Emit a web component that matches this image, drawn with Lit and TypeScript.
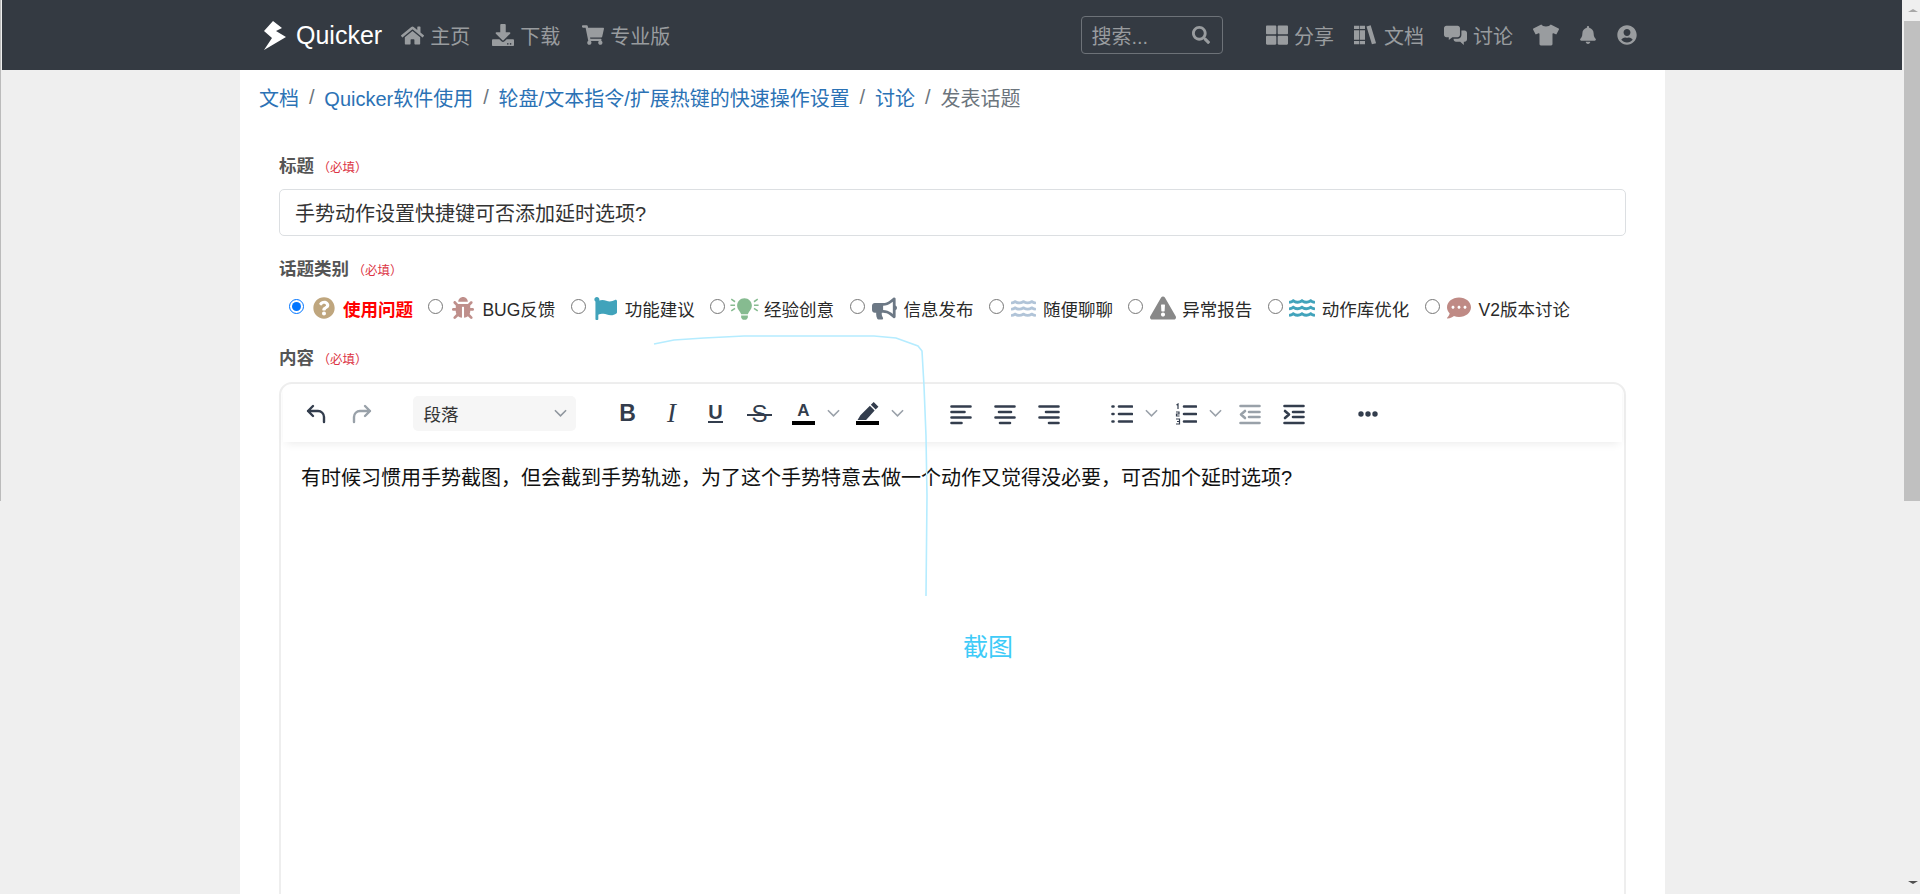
import { LitElement, html, css } from "lit";
import { customElement } from "lit/decorators.js";

const P = {
  home: ["0 0 576 512", "M280.37 148.26L96 300.11V464a16 16 0 0 0 16 16l112.06-.29a16 16 0 0 0 15.92-16V368a16 16 0 0 1 16-16h64a16 16 0 0 1 16 16v95.64a16 16 0 0 0 16 16.05L464 480a16 16 0 0 0 16-16V300L295.67 148.26a12.19 12.19 0 0 0-15.3 0zM571.6 251.47L488 182.56V44.05a12 12 0 0 0-12-12h-56a12 12 0 0 0-12 12v72.61L318.47 43a48 48 0 0 0-61 0L4.34 251.47a12 12 0 0 0-1.6 16.9l25.5 31A12 12 0 0 0 45.15 301l235.22-193.74a12.19 12.19 0 0 1 15.3 0L530.9 301a12 12 0 0 0 16.9-1.6l25.5-31a12 12 0 0 0-1.7-16.93z"],
  download: ["0 0 512 512", "M216 0h80c13.3 0 24 10.7 24 24v168h87.7c17.8 0 26.7 21.5 14.1 34.1L269.7 378.3c-7.5 7.5-19.8 7.5-27.3 0L90.1 226.1c-12.6-12.6-3.7-34.1 14.1-34.1H192V24c0-13.3 10.7-24 24-24zm296 376v112c0 13.3-10.7 24-24 24H24c-13.3 0-24-10.7-24-24V376c0-13.3 10.7-24 24-24h146.7l49 49c20.1 20.1 52.5 20.1 72.6 0l49-49H488c13.3 0 24 10.7 24 24zm-124 88c0-11-9-20-20-20s-20 9-20 20 9 20 20 20 20-9 20-20zm64 0c0-11-9-20-20-20s-20 9-20 20 9 20 20 20 20-9 20-20z"],
  cart: ["0 0 576 512", "M528.12 301.319l47.273-208C578.806 78.301 567.391 64 551.99 64H159.208l-9.166-44.81C147.758 8.021 137.93 0 126.529 0H24C10.745 0 0 10.745 0 24v16c0 13.255 10.745 24 24 24h69.883l70.248 343.435C147.325 417.1 136 435.222 136 456c0 30.928 25.072 56 56 56s56-25.072 56-56c0-15.674-6.447-29.835-16.824-40h209.647C430.447 426.165 424 440.326 424 456c0 30.928 25.072 56 56 56s56-25.072 56-56c0-22.172-12.888-41.332-31.579-50.405l5.517-24.276c3.413-15.018-8.002-29.319-23.403-29.319H218.117l-6.545-32h293.145c11.206 0 20.92-7.754 23.403-18.681z"],
  search: ["0 0 512 512", "M505 442.7L405.3 343c-4.5-4.5-10.6-7-17-7H372c27.6-35.3 44-79.7 44-128C416 93.1 322.9 0 208 0S0 93.1 0 208s93.1 208 208 208c48.3 0 92.7-16.4 128-44v16.3c0 6.4 2.5 12.5 7 17l99.7 99.7c9.4 9.4 24.6 9.4 33.9 0l28.3-28.3c9.4-9.4 9.4-24.6.1-34zM208 336c-70.7 0-128-57.2-128-128 0-70.7 57.2-128 128-128 70.7 0 128 57.2 128 128 0 70.7-57.2 128-128 128z"],
  grid: ["0 0 512 512", "M296 32h192c13.255 0 24 10.745 24 24v160c0 13.255-10.745 24-24 24H296c-13.255 0-24-10.745-24-24V56c0-13.255 10.745-24 24-24zm-80 0H24C10.745 32 0 42.745 0 56v160c0 13.255 10.745 24 24 24h192c13.255 0 24-10.745 24-24V56c0-13.255-10.745-24-24-24zM0 296v160c0 13.255 10.745 24 24 24h192c13.255 0 24-10.745 24-24V296c0-13.255-10.745-24-24-24H24c-13.255 0-24 10.745-24 24zm296 184h192c13.255 0 24-10.745 24-24V296c0-13.255-10.745-24-24-24H296c-13.255 0-24 10.745-24 24v160c0 13.255 10.745 24 24 24z"],
  books: ["0 0 576 512", "M0 32h120v448H0zM136 32h128v448H136zM300 50l100-26 130 430-100 26zM0 110h120v30H0zM0 370h120v30H0zM136 110h128v30H136zM136 370h128v30H136z"],
  comments: ["0 0 576 512", "M60 10h280c33 0 60 27 60 60v170c0 33-27 60-60 60H210l-90 70v-70H60c-33 0-60-27-60-60V70c0-33 27-60 60-60zM436 130h80c33 0 60 27 60 60v160c0 33-27 60-60 60h-20v86l-90-86H300c-33 0-60-27-60-60v-10h100c53 0 96-43 96-96z"],
  shirt: ["0 0 640 512", "M631.2 96.5L436.5 0C416.4 27.8 371.9 47.2 320 47.2S223.6 27.8 203.5 0L8.8 96.5c-7.9 4-11.1 13.6-7.2 21.5l57.2 114.5c4 7.9 13.6 11.1 21.5 7.2l56.6-27.7c10.6-5.2 23 2.5 23 14.4V480c0 17.7 14.3 32 32 32h256c17.7 0 32-14.3 32-32V226.3c0-11.8 12.4-19.6 23-14.4l56.6 27.7c7.9 4 17.5.8 21.5-7.2L638.3 118c4-7.9.8-17.6-7.1-21.5z"],
  bell: ["0 0 448 512", "M224 512c35.32 0 63.97-28.65 63.97-64H160.03c0 35.35 28.65 64 63.97 64zm215.39-149.71c-19.32-20.76-55.47-51.99-55.47-154.29 0-77.7-54.48-139.9-127.94-155.16V32c0-17.67-14.32-32-31.98-32s-31.98 14.33-31.98 32v20.84C118.56 68.1 64.08 130.3 64.08 208c0 102.3-36.15 133.53-55.47 154.29-6 6.45-8.66 14.16-8.61 21.71.11 16.4 12.98 32 32.1 32h383.8c19.12 0 32-15.6 32.1-32 .05-7.55-2.61-15.27-8.61-21.71z"],
  user: ["0 0 496 512", "M248 8C111 8 0 119 0 256s111 248 248 248 248-111 248-248S385 8 248 8zm0 96c48.6 0 88 39.4 88 88s-39.4 88-88 88-88-39.4-88-88 39.4-88 88-88zm0 344c-58.7 0-111.3-26.6-146.5-68.2 18.8-35.4 55.6-59.8 98.5-59.8 2.4 0 4.8.4 7.1 1.1 13 4.2 26.6 6.9 40.9 6.9 14.3 0 28-2.7 40.9-6.9 2.3-.7 4.7-1.1 7.1-1.1 42.9 0 79.7 24.4 98.5 59.8C359.3 421.4 306.7 448 248 448z"],
  question: ["0 0 512 512", "M504 256c0 136.997-111.043 248-248 248S8 392.997 8 256C8 119.083 119.043 8 256 8s248 111.083 248 248zM262.655 90c-54.497 0-89.255 22.957-116.549 63.758-3.536 5.286-2.353 12.415 2.715 16.258l34.699 26.31c5.205 3.947 12.621 3.008 16.665-2.122 17.864-22.658 30.113-35.797 57.303-35.797 20.429 0 45.698 13.148 45.698 32.958 0 14.976-12.363 22.667-32.534 33.976C247.128 238.528 216 254.941 216 296v4c0 6.627 5.373 12 12 12h56c6.627 0 12-5.373 12-12v-1.333c0-28.462 83.186-29.647 83.186-106.667 0-58.002-60.165-102-116.531-102zM256 338c-25.365 0-46 20.635-46 46 0 25.364 20.635 46 46 46s46-20.636 46-46c0-25.365-20.635-46-46-46z"],
  bug: ["0 0 512 512", "M511.988 288.9c-.478 17.43-15.217 31.1-32.653 31.1H424v16c0 21.864-4.882 42.584-13.6 61.145l60.228 60.228c12.496 12.497 12.496 32.758 0 45.255-12.498 12.497-32.759 12.496-45.256 0l-54.736-54.736C345.886 467.965 314.351 480 280 480V236c0-6.627-5.373-12-12-12h-24c-6.627 0-12 5.373-12 12v244c-34.351 0-65.886-12.035-90.636-32.108l-54.736 54.736c-12.498 12.497-32.759 12.496-45.256 0-12.496-12.497-12.496-32.758 0-45.255l60.228-60.228C92.882 378.584 88 357.864 88 336v-16H32.666C15.23 320 .491 306.33.013 288.9-.484 270.816 14.028 256 32 256h56v-58.745l-46.628-46.628c-12.496-12.497-12.496-32.758 0-45.255 12.498-12.497 32.758-12.497 45.256 0L141.255 160h229.489l54.627-54.627c12.498-12.497 32.758-12.497 45.256 0 12.496 12.497 12.496 32.758 0 45.255L424 197.255V256h56c17.972 0 32.484 14.816 31.988 32.9zM257 0c-61.856 0-112 50.144-112 112h224C369 50.144 318.856 0 257 0z"],
  flag: ["0 0 512 512", "M349.565 98.783C295.978 98.783 251.721 64 184.348 64c-24.955 0-47.309 4.384-68.045 12.013a55.947 55.947 0 0 0 3.586-23.562C118.117 24.015 94.806 1.206 66.338.048 34.345-1.254 8 24.296 8 56c0 19.026 9.497 35.825 24 45.945V488c0 13.255 10.745 24 24 24h16c13.255 0 24-10.745 24-24v-94.4c28.311-12.064 63.582-22.122 114.435-22.122 53.588 0 97.844 34.783 165.217 34.783 48.169 0 86.667-16.294 122.505-40.858C506.84 359.452 512 349.571 512 339.045v-243.1c0-23.393-24.269-38.87-45.485-29.016-34.338 15.948-76.454 31.854-116.95 31.854z"],
  bulb: ["-170 -20 692 532", "M96.06 454.35c.01 6.29 1.87 12.45 5.36 17.69l17.09 25.69a31.99 31.99 0 0 0 26.64 14.28h61.71a31.99 31.99 0 0 0 26.64-14.28l17.09-25.69a31.989 31.989 0 0 0 5.36-17.69l.04-38.35H96.01l.05 38.35zM0 176c0 44.37 16.45 84.85 43.56 115.78 16.52 18.85 42.36 58.23 52.21 91.45.04.26.07.52.11.78h160.24c.04-.26.07-.51.11-.78 9.85-33.22 35.69-72.6 52.21-91.45C335.55 260.85 352 220.37 352 176 352 78.61 272.91-.3 175.45 0 73.44.31 0 82.97 0 176zM-160 150h110v36h-110zM402 150h110v36H402zM-130 10l90 60-20 30-90-60zM482 10l-90 60 20 30 90-60zM-130 320l90-60-20-30-90 60zM482 320l-90-60 20-30 90 60z"],
  horn: ["0 0 576 512", "M576 240c0-23.63-12.95-44.04-32-55.12V32.01C544 23.26 537.02 0 512 0c-7.12 0-14.19 2.38-19.98 7.02l-85.03 68.03C364.28 109.19 310.66 128 256 128H64c-35.35 0-64 28.65-64 64v96c0 35.35 28.65 64 64 64h33.7c-1.39 10.48-2.18 21.14-2.18 32 0 39.77 9.26 77.35 25.56 110.94 5.19 10.69 16.52 17.06 28.4 17.06h74.28c26.05 0 41.69-29.84 25.9-50.56-16.4-21.52-26.15-48.36-26.15-77.44 0-11.11 1.62-21.79 4.41-32H256c54.66 0 108.28 18.81 150.98 52.95l85.03 68.03a32.023 32.023 0 0 0 19.98 7.02c24.92 0 32-22.78 32-32V295.13C563.05 284.04 576 263.63 576 240zm-96 141.42l-33.05-26.44C392.95 311.78 325.12 288 256 288v-96c69.12 0 136.95-23.78 190.95-66.98L480 98.58v282.84z"],
  water: ["0 0 576 512", "M562.1 383.9c-21.5-2.4-42.1-10.5-57.9-22.9-14.1-11.1-34.2-11.3-48.2 0-37.9 30.4-107.2 30.4-145.7-1.5-13.5-11.2-33-9.1-46.7 1.8-38 30.1-106.9 30-145.2-1.7-13.5-11.2-33.3-8.9-47.1 2-15.5 12.2-36 20.1-57.7 22.4-7.9.8-13.6 7.6-13.6 15.5v32.2c0 9.1 7.6 16.8 16.7 16 28.8-2.5 56.1-11.4 79.4-25.9 56.5 34.6 137 34.1 192 0 56.5 34.6 137 34.1 192 0 23.3 14.2 50.9 23.3 79.1 25.8 9.1.8 16.7-6.9 16.7-16v-31.6c.1-8-5.7-14.9-13.8-15.5zm0-144c-21.5-2.4-42.1-10.5-57.9-22.9-14.1-11.1-34.2-11.3-48.2 0-37.9 30.4-107.2 30.4-145.7-1.5-13.5-11.2-33-9.1-46.7 1.8-38 30.1-106.9 30-145.2-1.7-13.5-11.2-33.3-8.9-47.1 2-15.5 12.2-36 20.1-57.7 22.4-7.9.8-13.6 7.6-13.6 15.5v32.2c0 9.1 7.6 16.8 16.7 16 28.8-2.5 56.1-11.4 79.4-25.9 56.5 34.6 137 34.1 192 0 56.5 34.6 137 34.1 192 0 23.3 14.2 50.9 23.3 79.1 25.8 9.1.8 16.7-6.9 16.7-16v-31.6c.1-8-5.7-14.9-13.8-15.5zm0-144C540.6 93.4 520 85.4 504.2 73 490.1 61.9 470 61.7 456 73c-37.9 30.4-107.2 30.4-145.7-1.5-13.5-11.2-33-9.1-46.7 1.8-38 30.1-106.9 30-145.2-1.7-13.5-11.2-33.3-8.9-47.1 2-15.5 12.2-36 20.1-57.7 22.4-7.9.8-13.6 7.6-13.6 15.5v32.2c0 9.1 7.6 16.8 16.7 16 28.8-2.5 56.1-11.4 79.4-25.9 56.5 34.6 137 34.1 192 0 56.5 34.6 137 34.1 192 0 23.3 14.2 50.9 23.3 79.1 25.8 9.1.8 16.7-6.9 16.7-16v-31.6c.1-8-5.7-14.9-13.8-15.5z"],
  warn: ["0 0 576 512", "M569.517 440.013C587.975 472.007 564.806 512 527.94 512H48.054c-36.937 0-59.999-40.055-41.577-71.987L246.423 24c18.467-32.009 64.72-31.951 83.154 0l239.94 416.013zM288 354c-25.405 0-46 20.595-46 46s20.595 46 46 46 46-20.595 46-46-20.595-46-46-46zm-43.673-165.346l7.418 136c.347 6.364 5.609 11.346 11.982 11.346h48.546c6.373 0 11.635-4.982 11.982-11.346l7.418-136c.375-6.874-5.098-12.654-11.982-12.654h-63.383c-6.884 0-12.356 5.78-11.981 12.654z"],
  chat: ["0 0 512 512", "M256 32C114.6 32 0 125.1 0 240c0 49.6 21.4 95 57 130.7C44.5 421.1 2.7 466 2.2 466.5c-2.2 2.3-2.8 5.7-1.5 8.7S4.8 480 8 480c66.3 0 116-31.8 140.6-51.4 32.7 12.3 69 19.4 107.4 19.4 141.4 0 256-93.1 256-208S397.4 32 256 32zM128 272c-17.7 0-32-14.3-32-32s14.3-32 32-32 32 14.3 32 32-14.3 32-32 32zm128 0c-17.7 0-32-14.3-32-32s14.3-32 32-32 32 14.3 32 32-14.3 32-32 32zm128 0c-17.7 0-32-14.3-32-32s14.3-32 32-32 32 14.3 32 32-14.3 32-32 32z"],
} as const;

type IconName = keyof typeof P;
const icon = (n: IconName, w: number, color?: string) =>
  html`<svg class="fa" viewBox=${P[n][0]} width=${w} height=${w} fill=${color ?? "currentColor"}><path fill-rule="evenodd" d=${P[n][1]}></path></svg>`;

const line = (d: string, muted = false) =>
  html`<svg class="tb ${muted ? "muted" : ""}" viewBox="0 0 22 22" width="22" height="22" fill="none" stroke="currentColor" stroke-width="2.4" stroke-linecap="round" stroke-linejoin="round"><path d=${d}></path></svg>`;

const bars = (d: string, muted = false) =>
  html`<svg class="tb ${muted ? "muted" : ""}" viewBox="0 0 22 22" width="22" height="22" fill="none" stroke="currentColor" stroke-width="2.6" stroke-linecap="round" stroke-linejoin="round"><path d=${d}></path></svg>`;

const chevron = html`<span class="chev"><svg viewBox="0 0 14 8" width="13" height="8" fill="none" stroke="#9aa1a9" stroke-width="1.7"><path d="M1 1l6 6 6-6"></path></svg></span>`;

const topics: { n: IconName; w: number; c: string; t: string; on?: boolean }[] = [
  { n: "question", w: 22, c: "#bfa67e", t: "使用问题", on: true },
  { n: "bug", w: 22, c: "#bf8f8b", t: "BUG反馈" },
  { n: "flag", w: 23, c: "#41a3bb", t: "功能建议" },
  { n: "bulb", w: 29, c: "#86bb90", t: "经验创意" },
  { n: "horn", w: 25, c: "#6c7885", t: "信息发布" },
  { n: "water", w: 25, c: "#b1c4d8", t: "随便聊聊" },
  { n: "warn", w: 26, c: "#888888", t: "异常报告" },
  { n: "water", w: 26, c: "#41a3bb", t: "动作库优化" },
  { n: "chat", w: 24, c: "#bf8a85", t: "V2版本讨论" },
];

@customElement("app-root")
export class AppRoot extends LitElement {
  static styles = css`
    :host { display: block; height: 894px; overflow: hidden; font-family: "Liberation Sans", "Noto Sans CJK SC", sans-serif; }
    * { box-sizing: border-box; }
    .page { display: flex; height: 894px; background: #efefef; }
    .edge { width: 2px; flex: none; }
    .edge i { display: block; width: 1px; height: 501px; background: #bbbbbb; }
    .main { flex: 1; min-width: 0; position: relative; }
    .scroll { width: 18px; flex: none; display: flex; flex-direction: column; align-items: flex-end; position: relative; }
    .thumb { width: 16px; height: 480px; margin-top: 21px; background: #c0c0c0; }
    .arrow { position: absolute; right: 2px; width: 0; height: 0; border-left: 5px solid transparent; border-right: 5px solid transparent; }
    .arrow.up { top: 9px; border-bottom: 3px solid #a8a8a8; }
    .arrow.down { bottom: 10px; border-top: 3px solid #505050; }

    .nav { height: 70px; background: #343a42; display: flex; align-items: center; padding: 0 265px 0 262px; color: #999c9f; font-size: 20px; }
    .logo { display: flex; align-items: center; color: #fff; font-size: 25px; margin-right: 19px; gap: 10px; }
    .logo svg { display: block; }
    .item { display: flex; align-items: center; gap: 6px; margin-right: 22px; white-space: nowrap; }
    .item.r { margin-right: 20px; }
    .fa { display: block; flex: none; }
    .spacer { flex: 1; }
    .search { width: 142px; height: 38px; border: 1px solid #6d7278; border-radius: 4px; display: flex; align-items: center; justify-content: space-between; padding: 0 12px 0 10px; margin-right: 43.5px; font-size: 20px; }
    .search .ph { color: #999c9f; }

    .card { width: 1425px; margin-left: 238px; height: 824px; background: #fff; }
    .crumbs { display: flex; align-items: center; height: 54px; padding: 0 0 0 19px; font-size: 20px; color: #6c757d; }
    .crumbs a { color: #2b72b5; text-decoration: none; }
    .crumbs .sep { padding: 0 9.9px; color: #6c757d; }
    .form { padding: 29px 39px 0 39px; }
    .label { font-size: 17.5px; font-weight: 700; color: #555; height: 26px; line-height: 26px; display: flex; align-items: center; }
    .req { font-size: 12.5px; font-weight: 400; color: #dc3545; margin: 3px 0 0 3.5px; }
    .input { margin-top: 10px; height: 47px; border: 1px solid #dcdfe2; border-radius: 5px; display: flex; align-items: center; padding-left: 15px; font-size: 20px; color: #333; }
    .label.second { margin-top: 20px; }
    .topics { display: flex; align-items: center; height: 40px; margin-top: 6px; padding-left: 10px; gap: 15.4px; font-size: 17.5px; color: #2a2a2a; }
    .topic { display: flex; align-items: center; white-space: nowrap; }
    .topic input { width: 15px; height: 15px; margin: 0 0 4px; flex: none; accent-color: #0075ff; }
    .box { width: 39px; display: flex; justify-content: center; }
    .topic.on { color: #ff0000; font-weight: 700; }
    .label.third { margin-top: 17px; }

    .editor { margin-top: 11px; height: 700px; border: 2px solid #eeeeee; border-radius: 13px; }
    .toolbar { height: 58px; display: flex; align-items: center; box-shadow: 0 4px 9px -3px rgba(0, 0, 0, 0.09); margin: 0 2px; padding-left: 11px; color: #333d4d; }
    .btn { width: 44px; height: 36px; margin-top: 1px; display: flex; align-items: center; justify-content: center; flex: none; }
    .btn.r { margin-left: 2px; }
    .tb { display: block; }
    .muted { color: #99a1a9; }
    .select { width: 163px; height: 35px; background: #f6f6f6; border-radius: 5px; margin: 0 30px 0 28.5px; display: flex; align-items: center; justify-content: space-between; padding: 0 9px 0 11px; font-size: 17.5px; color: #333; flex: none; }
    .chev { width: 16px; display: flex; justify-content: center; flex: none; }
    .gl { font-family: "Liberation Sans", sans-serif; color: #333d4d; line-height: 1; }
    .gl.b { font-weight: 700; font-size: 23px; }
    .gl.i { font-family: "Liberation Serif", serif; font-style: italic; font-size: 27px; }
    .gl.u { font-size: 20px; border-bottom: 2.5px solid #333d4d; padding: 0; line-height: 17px; font-weight: 700; }
    .gl.s { font-size: 24px; position: relative; padding: 0 2px; }
    .gl.s::after { content: ""; position: absolute; left: -2px; right: -2px; top: 12px; height: 2px; background: #333d4d; }
    .gl.a { font-size: 17px; font-weight: 700; display: flex; flex-direction: column; align-items: center; }
    .gl.a::after { content: ""; width: 23px; height: 4px; background: #000; margin-top: 2px; }
    .pen { display: flex; flex-direction: column; align-items: center; }
    .pen::after { content: ""; width: 23px; height: 4px; background: #000; }
    .g1 { margin-left: 33px; }
    .g2 { margin-left: 29px; }
    .g3 { margin-left: 30px; }
    .gap4 { margin-left: 4px; }
    .gap3 { margin-left: 4px; }
    .content { padding: 22px 20px; font-size: 20px; line-height: 28px; color: #111; }

    .gesture { position: absolute; left: 0; top: 0; pointer-events: none; }
    .shot { position: absolute; left: 961px; top: 630px; color: #3fcbf8; font-size: 25px; line-height: 34px; }
  `;

  render() {
    return html`<div class="page">
      <div class="edge"><i></i></div>
      <div class="main">
        <header class="nav">
          <div class="logo">
            <svg viewBox="0 0 22 29" width="22" height="29" fill="#fff"><path d="M9 0l9 7-6 3 10 6L0 29l8-12-8-7z"></path></svg>
            <span>Quicker</span>
          </div>
          <div class="item">${icon("home", 23)}主页</div>
          <div class="item">${icon("download", 22)}下载</div>
          <div class="item">${icon("cart", 22)}专业版</div>
          <div class="spacer"></div>
          <div class="search"><span class="ph">搜索...</span>${icon("search", 18)}</div>
          <div class="item r">${icon("grid", 22)}分享</div>
          <div class="item r">${icon("books", 24)}文档</div>
          <div class="item r">${icon("comments", 23)}讨论</div>
          <div class="item r">${icon("shirt", 26)}</div>
          <div class="item r">${icon("bell", 18)}</div>
          ${icon("user", 20)}
        </header>
        <section class="card">
          <nav class="crumbs">
            <a>文档</a><span class="sep">/</span><a>Quicker软件使用</a><span class="sep">/</span><a>轮盘/文本指令/扩展热键的快速操作设置</a><span class="sep">/</span><a>讨论</a><span class="sep">/</span><span>发表话题</span>
          </nav>
          <div class="form">
            <div class="label">标题<span class="req">（必填）</span></div>
            <div class="input">手势动作设置快捷键可否添加延时选项?</div>
            <div class="label second">话题类别<span class="req">（必填）</span></div>
            <div class="topics">
              ${topics.map(
                (t) => html`<label class="topic ${t.on ? "on" : ""}"><input type="radio" name="topic" ?checked=${t.on} /><span class="box">${icon(t.n, t.w, t.c)}</span>${t.t}</label>`
              )}
            </div>
            <div class="label third">内容<span class="req">（必填）</span></div>
            <div class="editor">
              <div class="toolbar">
                <div class="btn">${line("M8 3L3 8l5 5M3 8h10a6 6 0 0 1 6 6v5")}</div>
                <div class="btn r">${line("M14 3l5 5-5 5M19 8H9a6 6 0 0 0-6 6v5", true)}</div>
                <div class="select"><span>段落</span><svg viewBox="0 0 14 8" width="13" height="8" fill="none" stroke="#8f969e" stroke-width="1.7"><path d="M1 1l6 6 6-6"></path></svg></div>
                <div class="btn"><span class="gl b">B</span></div>
                <div class="btn"><span class="gl i">I</span></div>
                <div class="btn"><span class="gl u">U</span></div>
                <div class="btn"><span class="gl s">S</span></div>
                <div class="btn"><span class="gl a">A</span></div>
                ${chevron}
                <div class="btn gap4"><span class="pen"><svg viewBox="0 0 24 20" width="24" height="19" fill="#333d4d"><path d="M18 0l5 5-3 3-5-5zM14 4l5 5-9 10H1l3-5z"></path></svg></span></div>
                ${chevron}
                <div class="btn g1">${bars("M1.5 3.5h19M1.5 9h13M1.5 14.5h19M1.5 20h10")}</div>
                <div class="btn">${bars("M1.5 3.5h19M5 9h12M1.5 14.5h19M6 20h10")}</div>
                <div class="btn">${bars("M1.5 3.5h19M8 9h12.5M1.5 14.5h19M11 20h9.5")}</div>
                <div class="btn g2">${bars("M8 3.5h13M8 11h13M8 18.5h13M1.5 3.5h1M1.5 11h1M1.5 18.5h1")}</div>
                ${chevron}
                <div class="btn gap3"><svg class="tb" viewBox="0 0 22 22" width="22" height="22" fill="none" stroke="currentColor" stroke-width="2.6" stroke-linecap="round"><path d="M9 3.5h12M9 11h12M9 18.5h12"></path><path stroke-width="1.2" stroke-linecap="butt" d="M1.5 2l1.5-1v5M1 9h3v2H1.5v2H4.5M1 16h3.5v2.5H2h2.5V21H1"></path></svg></div>
                ${chevron}
                <div class="btn gap3">${bars("M1.5 3h19M10 9h10.5M10 14h10.5M1.5 20h19M6 8l-4 3.5L6 15", true)}</div>
                <div class="btn">${bars("M1.5 3h19M10 9h10.5M10 14h10.5M1.5 20h19M2 8l4 3.5L2 15")}</div>
                <div class="btn g3"><svg viewBox="0 0 20 6" width="20" height="6" fill="currentColor"><circle cx="3" cy="3" r="2.7"></circle><circle cx="10" cy="3" r="2.7"></circle><circle cx="17" cy="3" r="2.7"></circle></svg></div>
              </div>
              <div class="content">有时候习惯用手势截图，但会截到手势轨迹，为了这个手势特意去做一个动作又觉得没必要，可否加个延时选项?</div>
            </div>
          </div>
        </section>
        <svg class="gesture" width="1900" height="894" fill="none" stroke="#b5ecff" stroke-width="1.6"><path d="M652 344l20-4 30-2 40-2h130l22 2 22 8 4 5 2 35 2 50 1 60-1 100"></path></svg>
        <div class="shot">截图</div>
      </div>
      <div class="scroll">
        <span class="arrow up"></span>
        <div class="thumb"></div>
        <span class="arrow down"></span>
      </div>
    </div>`;
  }
}
